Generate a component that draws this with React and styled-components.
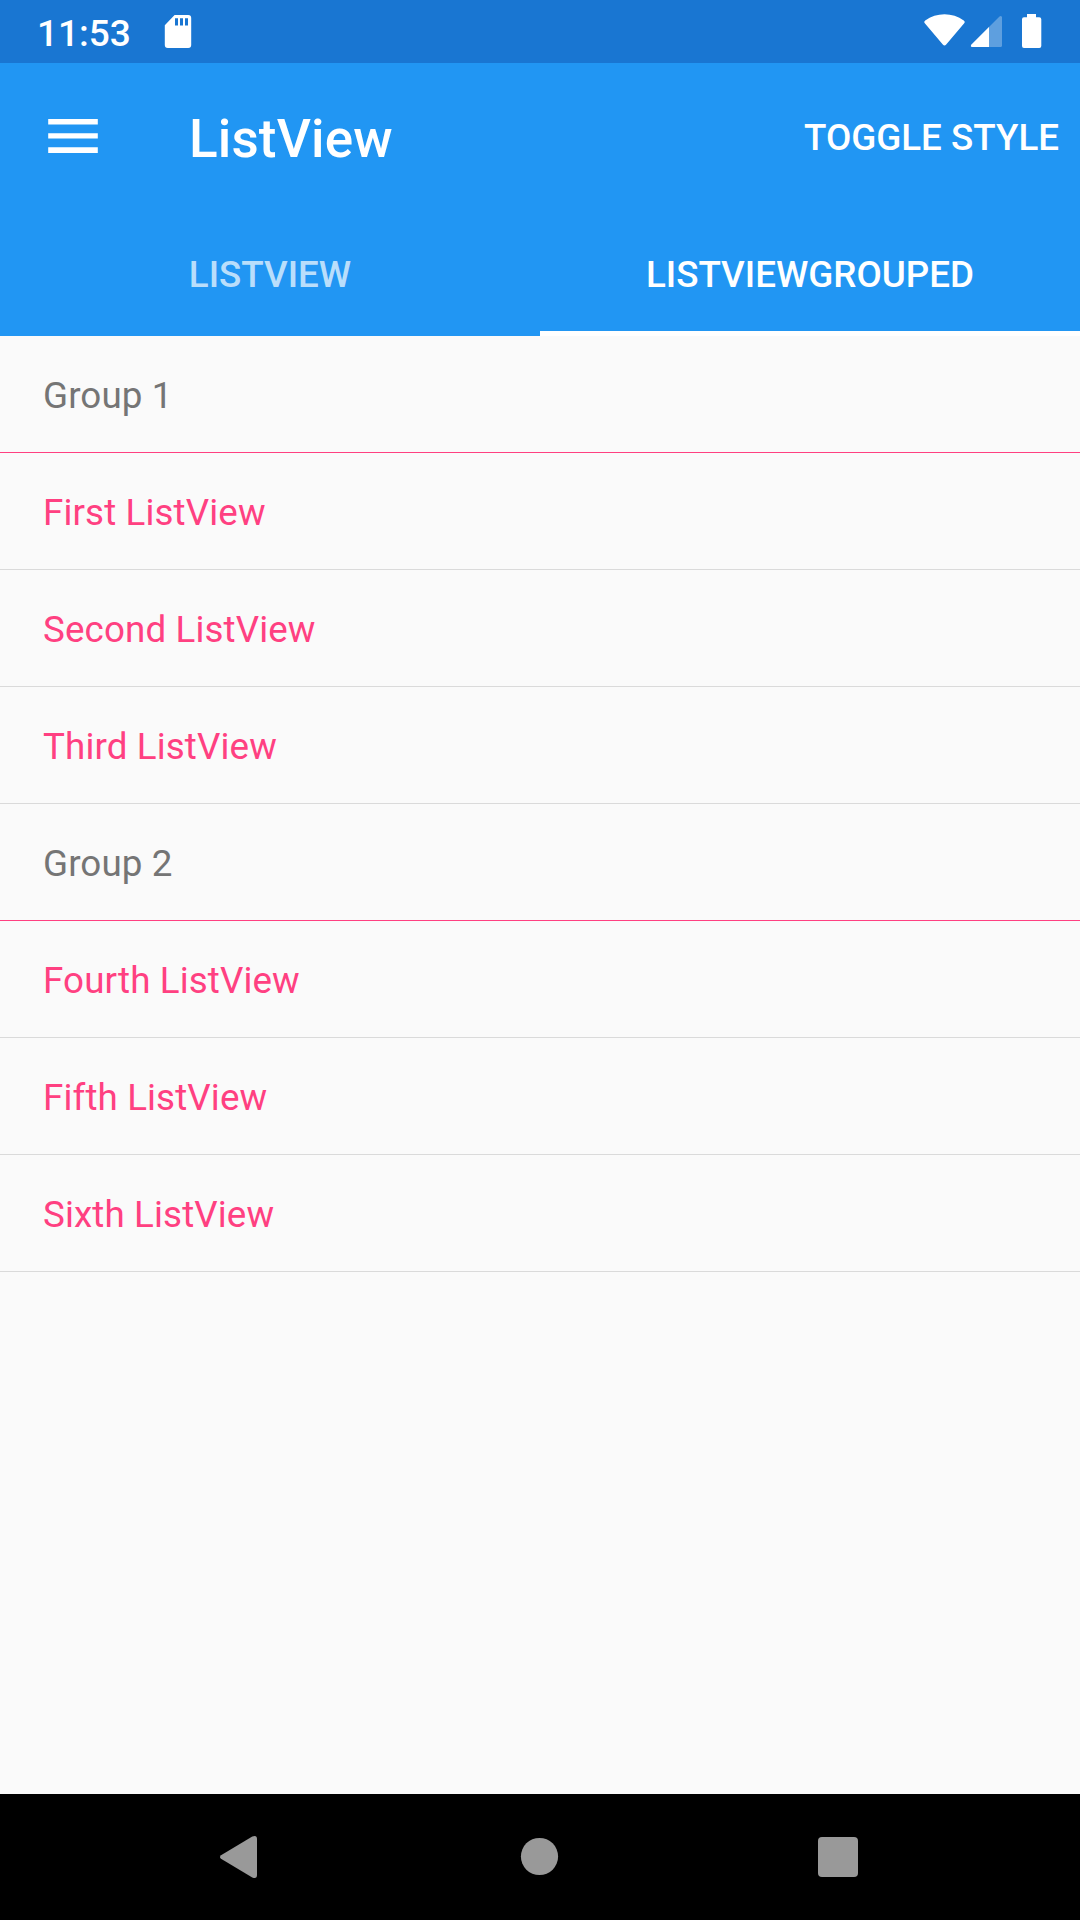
import React from "react";
import styled, { createGlobalStyle } from "styled-components";

const GlobalStyle = createGlobalStyle`
  *, *::before, *::after { box-sizing: border-box; }
  body { margin: 0; background: #fafafa; }
`;

const Screen = styled.div`
  display: flex;
  flex-direction: column;
  width: 1080px;
  height: 1920px;
  overflow: hidden;
  background: #fafafa;
  font-family: Roboto, sans-serif;
`;

const StatusBar = styled.header`
  display: flex;
  align-items: flex-start;
  justify-content: space-between;
  flex: none;
  height: 63px;
  padding: 0 37px 0 37px;
  background: #1976d2;
  color: #fff;
`;

const StatusGroup = styled.div`
  display: flex;
  align-items: flex-start;
`;

const Clock = styled.time`
  width: 96px;
  margin-right: 27px;
  padding-top: 12px;
  font-size: 37px;
  font-weight: 500;
  line-height: 43px;
  white-space: nowrap;
`;

const Glyph = styled.svg`
  display: block;
  flex: none;
`;

const AppBar = styled.div`
  display: flex;
  align-items: center;
  flex: none;
  height: 147px;
  padding: 0 21px 0 47px;
  background: #2196f3;
  color: #fff;
`;

const PlainButton = styled.button`
  padding: 0;
  border: 0;
  background: none;
  color: inherit;
  font: inherit;
`;

const MenuButton = styled(PlainButton)`
  width: 52px;
  margin-right: 90px;
  padding-bottom: 1px;
`;

const Title = styled.h1`
  flex: 1;
  margin: 0;
  padding-top: 5px;
  font-size: 53px;
  font-weight: 500;
  line-height: 62px;
  letter-spacing: 0.15px;
`;

const ActionButton = styled(PlainButton)`
  font-size: 36.75px;
  font-weight: 500;
  line-height: 44px;
  padding-top: 2px;
`;

const TabBar = styled.nav`
  display: grid;
  grid-template-columns: 1fr 1fr;
  flex: none;
  height: 126px;
  background: #2196f3;
  color: #fff;
`;

const Tab = styled(PlainButton)`
  padding-top: 8px;
  border-bottom: 5px solid ${({ $active }) => ($active ? "#fff" : "transparent")};
  color: ${({ $active }) => ($active ? "#fff" : "rgba(255, 255, 255, 0.7)")};
  font-size: 36.75px;
  font-weight: 500;
  line-height: 44px;
`;

const List = styled.main`
  display: flex;
  flex-direction: column;
  flex: 1;
`;

const Row = styled.div`
  display: flex;
  align-items: center;
  height: 117px;
  padding: 3px 43px 0;
  border-bottom: 1px solid ${({ $header }) => ($header ? "#ff4081" : "#dadada")};
  color: ${({ $header }) => ($header ? "#757575" : "#ff4081")};
  font-size: 36.75px;
  line-height: 44px;
  letter-spacing: 0.12px;
`;

const NavigationBar = styled.footer`
  display: flex;
  align-items: center;
  justify-content: space-between;
  flex: none;
  height: 126px;
  padding: 0 217px 0 214px;
  background: #000;
`;

const groups = [
  { name: "Group 1", items: ["First ListView", "Second ListView", "Third ListView"] },
  { name: "Group 2", items: ["Fourth ListView", "Fifth ListView", "Sixth ListView"] },
];

const SdCardIcon = () => (
  <Glyph width="40" height="63" viewBox="160 0 40 63" fill="#fff">
    <path
      fillRule="evenodd"
      d="M174.6 15H188.2a3 3 0 0 1 3 3V45a3 3 0 0 1-3 3H167.8a3 3 0 0 1-3-3V25.2ZM175 18.3V25.5H178V18.3ZM180 18.3V25.5H183V18.3ZM185 18.3V25.5H188V18.3Z"
    />
  </Glyph>
);

const StatusIcons = () => (
  <Glyph width="123" height="63" viewBox="920 0 123 63" fill="#fff">
    <path d="M924.8 23.2C923.9 22.2 924.2 21.2 925.2 20.4C936.5 12.1 952.5 12.1 963.8 20.4C964.8 21.2 965.1 22.2 964.2 23.2L946.2 44.6Q944.5 46.6 942.8 44.6Z" />
    <path
      fillOpacity="0.3"
      d="M971.5 44.5L999.5 16.5Q1001 15.3 1002 17V45.5Q1002 47 1000.5 47H972.3Q969.8 46.5 971.5 44.5Z"
    />
    <path d="M989 27V47H972.3Q969.8 46.5 971.5 44.5Z" />
    <path d="M1027 14H1036V17.3H1039.2Q1041.3 17.3 1041.3 19.3V46Q1041.3 48 1039.3 48H1024Q1022 48 1022 46V19.3Q1022 17.3 1024 17.3H1027Z" />
  </Glyph>
);

const MenuIcon = () => (
  <Glyph width="52" height="36" viewBox="47 118 52 36" fill="#fff">
    <path d="M48.2 119H97.8V124.4H48.2ZM48.2 133.2H97.8V138.6H48.2ZM48.2 147.2H97.8V153H48.2Z" />
  </Glyph>
);

const BackIcon = () => (
  <Glyph width="48" height="48" viewBox="214 1833 48 48" fill="#999">
    <path d="M221 1855.2L252.3 1836.5Q257 1834.7 257 1839V1875Q257 1879.2 252.3 1877.4L221 1858.8Q219 1857 221 1855.2Z" />
  </Glyph>
);

const HomeIcon = () => (
  <Glyph width="40" height="48" viewBox="519 1833 40 48" fill="#999">
    <circle cx="539.5" cy="1856.5" r="18.6" />
  </Glyph>
);

const RecentsIcon = () => (
  <Glyph width="48" height="48" viewBox="815 1833 48 48" fill="#999">
    <rect x="818" y="1837" width="40" height="40" rx="4" />
  </Glyph>
);

export default function App() {
  return (
    <Screen>
      <GlobalStyle />
      <StatusBar>
        <StatusGroup>
          <Clock>11:53</Clock>
          <SdCardIcon />
        </StatusGroup>
        <StatusIcons />
      </StatusBar>
      <AppBar>
        <MenuButton aria-label="Menu">
          <MenuIcon />
        </MenuButton>
        <Title>ListView</Title>
        <ActionButton>TOGGLE STYLE</ActionButton>
      </AppBar>
      <TabBar>
        <Tab>LISTVIEW</Tab>
        <Tab $active>LISTVIEWGROUPED</Tab>
      </TabBar>
      <List>
        {groups.map((group) => (
          <React.Fragment key={group.name}>
            <Row $header>{group.name}</Row>
            {group.items.map((item) => (
              <Row key={item}>{item}</Row>
            ))}
          </React.Fragment>
        ))}
      </List>
      <NavigationBar>
        <BackIcon />
        <HomeIcon />
        <RecentsIcon />
      </NavigationBar>
    </Screen>
  );
}
